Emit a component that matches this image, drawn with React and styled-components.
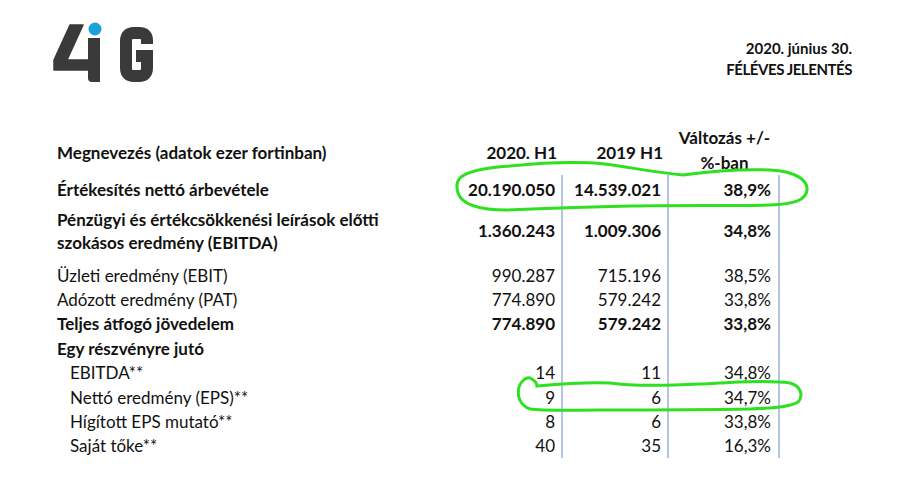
import styled, { createGlobalStyle } from "styled-components";

const GlobalStyle = createGlobalStyle`
  html, body {
    margin: 0;
    padding: 0;
    background: #ffffff;
  }
  body {
    font-family: Lato, "Liberation Sans", sans-serif;
    color: #111111;
  }
`;

const Page = styled.div`
  position: relative;
  width: 903px;
  height: 483px;
  overflow: hidden;
  background: #ffffff;
`;

const TopBar = styled.header`
  display: flex;
  justify-content: space-between;
  align-items: flex-start;
  padding: 18px 51px 0 50px;
  height: 125px;
  box-sizing: border-box;
`;

const DateBlock = styled.div`
  margin-top: 20px;
  display: flex;
  flex-direction: column;
  align-items: flex-end;
  font-weight: 700;
  font-size: 15px;
  line-height: 21px;
`;

const DateLine = styled.span`
  letter-spacing: ${(p) => (p.$tight ? "-0.45px" : "0")};
`;

const Table = styled.div`
  display: grid;
  grid-template-columns: 393px 113px 106px 111px;
  margin-left: 57px;
`;

const HeadCell = styled.div`
  height: 50px;
  display: flex;
  align-items: center;
  justify-content: ${(p) => p.$align || "flex-start"};
  text-align: ${(p) => (p.$align === "center" ? "center" : "left")};
  padding-right: ${(p) => p.$pr || 0}px;
  padding-top: ${(p) => (p.$twoLine ? 0 : 4)}px;
  box-sizing: border-box;
  font-weight: 700;
  font-size: 17px;
  line-height: 25px;
`;

const Label = styled.div`
  height: ${(p) => p.$h}px;
  padding-bottom: ${(p) => p.$pb || 0}px;
  padding-left: ${(p) => (p.$indent ? 13 : 0)}px;
  box-sizing: border-box;
  display: flex;
  align-items: center;
  white-space: nowrap;
  font-weight: ${(p) => (p.$bold ? 700 : 400)};
  font-size: 17px;
  line-height: 23px;
`;

const Value = styled.div`
  height: ${(p) => p.$h}px;
  padding-bottom: ${(p) => p.$pb || 0}px;
  padding-right: ${(p) => p.$pr}px;
  box-sizing: border-box;
  display: flex;
  align-items: center;
  justify-content: flex-end;
  border-right: 2px solid #b2c5e7;
  font-weight: ${(p) => (p.$bold ? 700 : 400)};
  font-size: 17px;
`;

const Overlay = styled.svg`
  position: absolute;
  left: 0;
  top: 0;
  pointer-events: none;
`;

const Logo = () => (
  <svg width="110" height="70" viewBox="0 0 110 70">
    <path d="M20 7 L33 7 L17 42 L38 42 L38 52 L4 52 L4 42 Z" fill="#3a3a3c" strokeLinejoin="round" stroke="#3a3a3c" strokeWidth="1.5" />
    <path d="M38 20 L50 20 L50 64 L42 64 Q38 64 38 60 Z" fill="#3a3a3c" />
    <circle cx="45" cy="11" r="6.5" fill="#1da1db" />
    <path
      d="M97 26 L97 22 Q97 15 89 15 L84 15 Q76 15 76 23 L76 50 Q76 58 84 58 L89 58 Q97 58 97 50 L97 38 L86 38"
      fill="none"
      stroke="#3a3a3c"
      strokeWidth="12"
    />
  </svg>
);

const rows = [
  { label: "Értékesítés nettó árbevétele", v: ["20.190.050", "14.539.021", "38,9%"], bold: true, h: 28 },
  {
    label: (
      <span>
        Pénzügyi és értékcsökkenési leírások előtti
        <br />
        szokásos eredmény (EBITDA)
      </span>
    ),
    v: ["1.360.243", "1.009.306", "34,8%"],
    bold: true,
    h: 60,
    pb: 5,
  },
  { label: "Üzleti eredmény (EBIT)", v: ["990.287", "715.196", "38,5%"], h: 24.4 },
  { label: "Adózott eredmény (PAT)", v: ["774.890", "579.242", "33,8%"], h: 24.4 },
  { label: "Teljes átfogó jövedelem", v: ["774.890", "579.242", "33,8%"], bold: true, h: 24.4 },
  { label: "Egy részvényre jutó", v: ["", "", ""], labelBold: true, h: 24.4 },
  { label: "EBITDA**", v: ["14", "11", "34,8%"], indent: true, h: 24.4 },
  { label: "Nettó eredmény (EPS)**", v: ["9", "6", "34,7%"], indent: true, h: 24.4 },
  { label: "Hígított EPS mutató**", v: ["8", "6", "33,8%"], indent: true, h: 24.4 },
  { label: "Saját tőke**", v: ["40", "35", "16,3%"], indent: true, h: 24.4 },
];

const padRight = [6, 6, 7];

export default function App() {
  return (
    <Page>
      <GlobalStyle />
      <TopBar>
        <Logo />
        <DateBlock>
          <DateLine>2020. június 30.</DateLine>
          <DateLine $tight>FÉLÉVES JELENTÉS</DateLine>
        </DateBlock>
      </TopBar>
      <Table>
        <HeadCell>Megnevezés (adatok ezer fortinban)</HeadCell>
        <HeadCell $align="flex-end" $pr={6}>2020. H1</HeadCell>
        <HeadCell $align="flex-end" $pr={6}>2019 H1</HeadCell>
        <HeadCell $align="center" $twoLine>
          Változás +/-
          <br />
          %-ban
        </HeadCell>
        {rows.map((r, i) => (
          <>
            <Label key={"l" + i} $h={r.h} $pb={r.pb} $indent={r.indent} $bold={r.bold || r.labelBold}>
              {r.label}
            </Label>
            {r.v.map((val, j) => (
              <Value key={"v" + i + j} $h={r.h} $pb={r.pb} $pr={padRight[j]} $bold={r.bold}>
                {val}
              </Value>
            ))}
          </>
        ))}
      </Table>
      <Overlay width="903" height="483" viewBox="0 0 903 483">
        <path
          d="M460 178 C466 172 480 168 510 166 C540 163 575 161 605 164 C630 167 650 172 683 175 C705 172 740 169 770 170 C795 171 808 180 807 190 C806 200 795 204 770 205 C730 206 680 205 630 206 C590 207 550 208 507 210 C480 210 462 205 458 193 C456 186 457 181 460 178"
          fill="none"
          stroke="#2ee01f"
          strokeWidth="3"
          strokeLinecap="round"
        />
        <path
          d="M530 378 C534 380 537 383 537 386 C560 384 590 382 610 383 C630 386 660 386 700 384 C740 382 770 380 790 383 C801 386 803 395 799 401 C794 406 780 408 750 409 C700 410 650 410 600 410 C570 410 545 411 530 409 C519 405 517 395 519 387 C521 381 526 377 530 378"
          fill="none"
          stroke="#2ee01f"
          strokeWidth="3"
          strokeLinecap="round"
        />
      </Overlay>
    </Page>
  );
}
